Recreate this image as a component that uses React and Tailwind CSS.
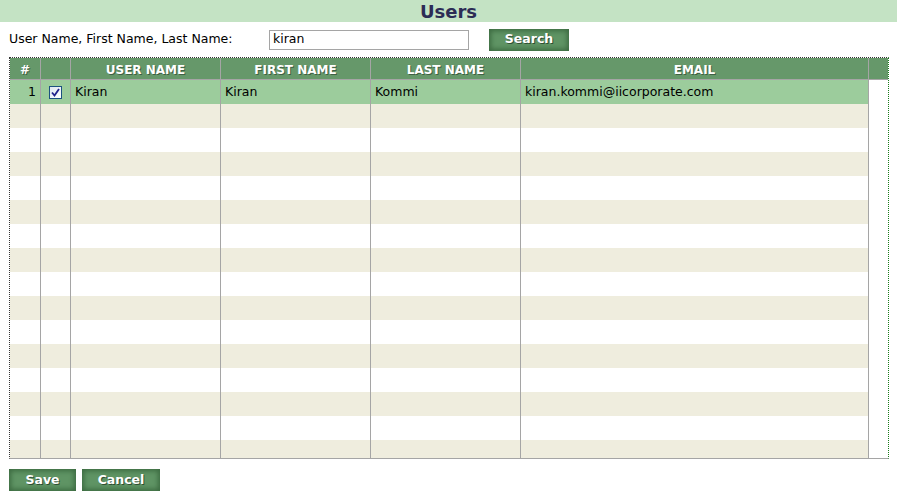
import React from "react";

const font = { fontFamily: '"DejaVu Sans", Verdana, sans-serif' };

// widths include the 1px right border of each cell
const cols = [
  { key: "num", w: "w-[31px]", label: "#" },
  { key: "chk", w: "w-[30px]", label: "" },
  { key: "user", w: "w-[150px]", label: "USER NAME" },
  { key: "first", w: "w-[150px]", label: "FIRST NAME" },
  { key: "last", w: "w-[150px]", label: "LAST NAME" },
  { key: "email", w: "w-[348px]", label: "EMAIL" },
];

const rows = [{ num: 1, user: "Kiran", first: "Kiran", last: "Kommi", email: "kiran.kommi@iicorporate.com" }];

function GreenButton({ children, className }) {
  return (
    <button
      className={`h-[22px] bg-[#5f9464] text-white font-bold text-[12.5px] shadow-[inset_0_0_5px_2px_#3c6b41] [text-shadow:1px_1px_0_#2f4f33] ${className}`}
    >
      {children}
    </button>
  );
}

function Checkbox() {
  return (
    <span className="inline-flex w-[13px] h-[13px] border border-[#1c5180] bg-gradient-to-br from-[#dde6f0] to-[#ffffff] items-center justify-center">
      <svg width="9" height="9" viewBox="0 0 9 9">
        <path d="M1 4.5 L3.5 7.5 L8 1" fill="none" stroke="#21218c" strokeWidth="1.8" />
      </svg>
    </span>
  );
}

export default function App() {
  const bodyRows = Array.from({ length: 16 }, (_, i) => rows[i] || null);

  return (
    <div className="w-[897px] h-[495px] bg-white text-black" style={font}>
      <div className="h-[22px] bg-[#c4e3c4] flex items-center justify-center">
        <span className="text-[18px] font-bold text-[#2c2c55] leading-none mt-[1px]">Users</span>
      </div>

      <div className="flex items-center h-[27px] mt-[4px] pl-[9px]">
        <span className="text-[12.5px] w-[260px]">User Name, First Name, Last Name:</span>
        <div className="w-[200px] h-[20px] border border-[#a5a5a5] flex items-center px-[3px] text-[12.5px]">
          kiran
        </div>
        <GreenButton className="ml-[20px] w-[80px]">Search</GreenButton>
      </div>

      <div className="ml-[9px] mt-[4px] w-[880px] h-[402px] border border-dotted border-t-[#333] border-l-[#333] border-r-[#1a7a1a] border-b-[#a5a5a5] [border-bottom-style:solid] flex flex-col overflow-hidden">
        <div className="flex h-[22px] bg-[#66986a] border-b border-[#a5a5a5] shrink-0">
          {cols.map((c) => (
            <div
              key={c.key}
              className={`${c.w} shrink-0 border-r border-[#a5a5a5] flex items-center justify-center pt-[2px] text-white font-bold text-[12px] [text-shadow:1px_1px_0_#3f5f43]`}
            >
              {c.label}
            </div>
          ))}
          <div className="flex-1" />
        </div>
        <div className="flex flex-1 min-h-0">
          <div className="w-[859px] shrink-0 flex flex-col">
            {bodyRows.map((r, i) => {
              const bg = r ? "bg-[#9ccc9c]" : i % 2 === 1 ? "bg-[#efedde]" : "bg-white";
              return (
                <div key={i} className={`flex h-[24px] shrink-0 ${bg} text-[12.5px]`}>
                  <div className="w-[31px] shrink-0 border-r border-[#a5a5a5] flex items-center justify-end pr-[4px]">
                    {r ? r.num : ""}
                  </div>
                  <div className="w-[30px] shrink-0 border-r border-[#a5a5a5] flex items-center justify-center">
                    {r ? <Checkbox /> : null}
                  </div>
                  <div className="w-[150px] shrink-0 border-r border-[#a5a5a5] flex items-center pl-[4px]">{r ? r.user : ""}</div>
                  <div className="w-[150px] shrink-0 border-r border-[#a5a5a5] flex items-center pl-[4px]">{r ? r.first : ""}</div>
                  <div className="w-[150px] shrink-0 border-r border-[#a5a5a5] flex items-center pl-[4px]">{r ? r.last : ""}</div>
                  <div className="w-[348px] shrink-0 border-r border-[#a5a5a5] flex items-center pl-[4px]">{r ? r.email : ""}</div>
                </div>
              );
            })}
          </div>
          <div className="flex-1 bg-white" />
        </div>
      </div>

      <div className="flex gap-[6px] pl-[9px] mt-[10px]">
        <GreenButton className="w-[67px]">Save</GreenButton>
        <GreenButton className="w-[78px]">Cancel</GreenButton>
      </div>
    </div>
  );
}
